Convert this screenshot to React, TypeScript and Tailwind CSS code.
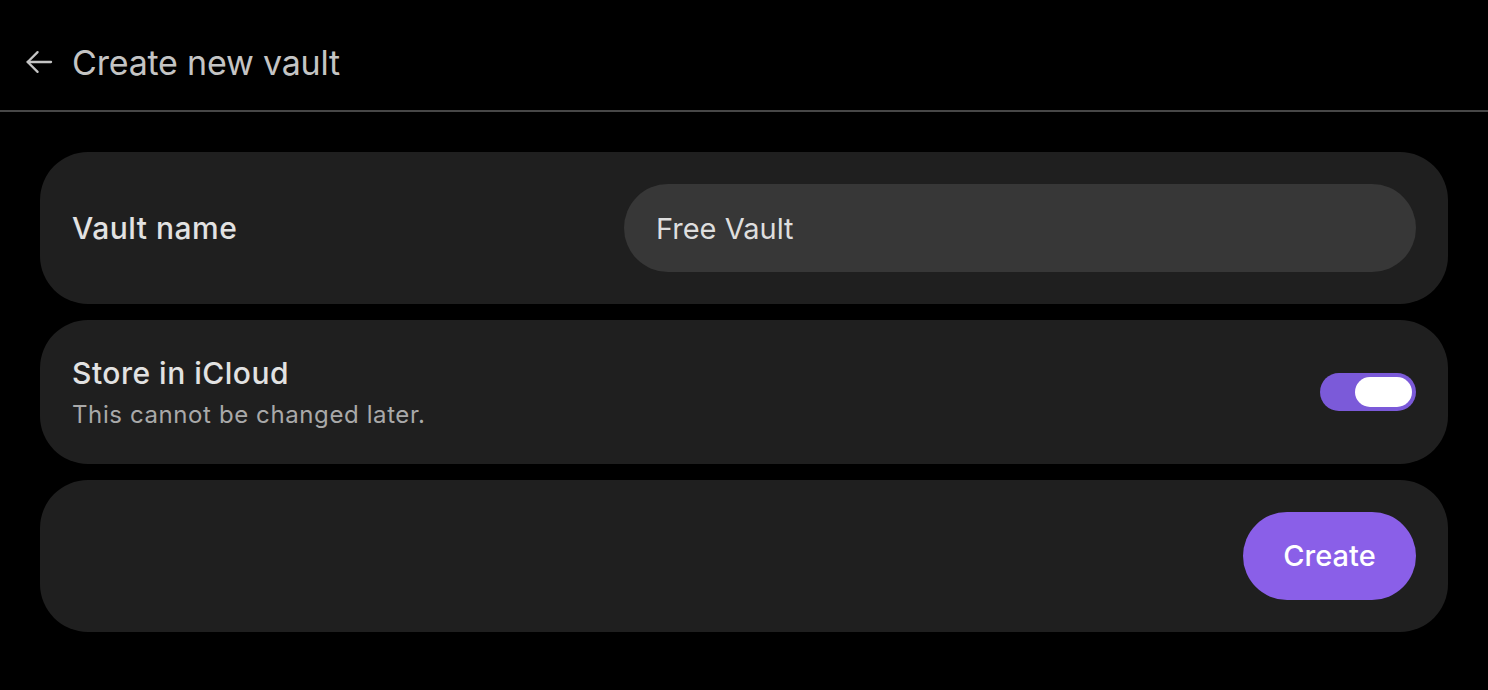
import { useState } from 'react';

function BackArrow() {
    return (
        <svg width="34" height="34" viewBox="0 0 24 24" fill="none" stroke="currentColor" strokeWidth="1.6" strokeLinecap="round" strokeLinejoin="round">
            <path d="M20.5 12H4" />
            <path d="M11 5l-7 7 7 7" />
        </svg>
    );
}

function Toggle({ on, onChange }: { on: boolean; onChange: (v: boolean) => void }) {
    return (
        <button
            type="button"
            onClick={() => onChange(!on)}
            className={`flex h-[38px] w-[96px] items-center rounded-full p-[4px] ${on ? 'justify-end bg-[#7b5ad9]' : 'justify-start bg-[#3a3a3a]'}`}
        >
            <span className="h-[30px] w-[57px] rounded-full bg-white" />
        </button>
    );
}

export default function App() {
    const [name, setName] = useState('Free Vault');
    const [icloud, setIcloud] = useState(true);

    return (
        <div className="min-h-[690px] w-full bg-black font-['Inter',sans-serif] text-[#e4e4e4]">
            <header className="flex h-[112px] items-center gap-[16px] border-b-2 border-[#474747] pl-[22px] pt-[14px]">
                <span className="text-[#c4c4c4]"><BackArrow /></span>
                <h1 className="text-[34px] font-normal tracking-[-0.2px] text-[#c4c4c4]">Create new vault</h1>
            </header>

            <div className="flex flex-col gap-4 px-10 pt-[40px]">
                <div className="flex h-[152px] items-center rounded-[48px] bg-[#1f1f1f] px-8">
                    <span className="w-[552px] text-[30px] font-medium tracking-[0.5px] text-[#e2e2e2]">Vault name</span>
                    <input
                        value={name}
                        onChange={e => setName(e.target.value)}
                        className="h-[88px] flex-1 rounded-full bg-[#373737] px-8 text-[29px] text-[#dedede] outline-none"
                    />
                </div>

                <div className="flex h-[144px] items-center justify-between rounded-[48px] bg-[#1f1f1f] px-8">
                    <div className="flex flex-col gap-[9px]">
                        <span className="text-[30px] font-medium leading-[36px] tracking-[0.5px] text-[#e2e2e2]">Store in iCloud</span>
                        <span className="text-[24px] leading-[30px] tracking-[0.6px] text-[#a9a9a9]">This cannot be changed later.</span>
                    </div>
                    <Toggle on={icloud} onChange={setIcloud} />
                </div>

                <div className="flex h-[152px] items-center justify-end rounded-[48px] bg-[#1f1f1f] px-8">
                    <button type="button" className="h-[88px] w-[173px] rounded-full bg-[#8a5fe8] text-[29px] font-medium text-white">
                        Create
                    </button>
                </div>
            </div>
        </div>
    );
}
